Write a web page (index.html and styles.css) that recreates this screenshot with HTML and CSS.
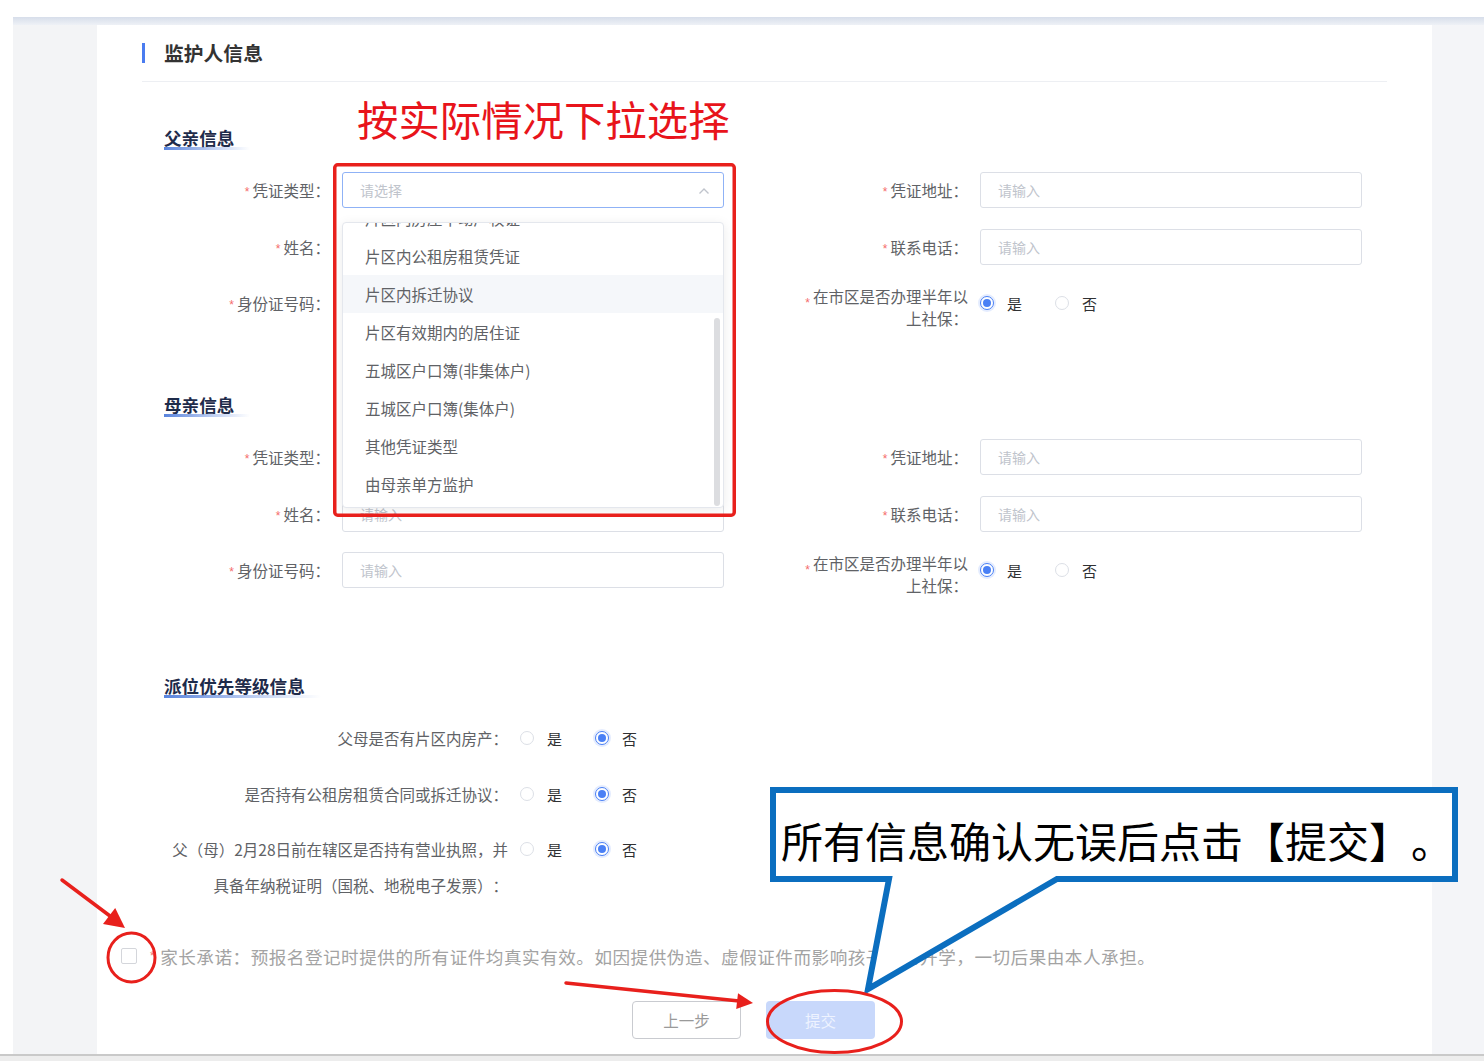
FILE: index.html
```html
<!DOCTYPE html>
<html lang="zh-CN">
<head>
<meta charset="utf-8">
<title>监护人信息</title>
<link rel="stylesheet" href="styles.css">
</head>
<body>
<div class="top-gap"></div>
<div class="screen">
  <div class="topband"></div>
  <div class="main">
    <aside class="side"></aside>
    <section class="card">
      <div class="card-head"><span class="bar"></span><h2>监护人信息</h2></div>
      <div class="divider"></div>
      <div class="form">
        <h3 class="sub"><span>父亲信息</span></h3>
        <div class="grid">
          <div class="field">
            <label class="lbl"><i>*</i>凭证类型：</label>
            <div class="input select focus">请选择
              <svg class="chev" width="12" height="8" viewBox="0 0 12 8"><polyline points="1.5,6.5 6,2 10.5,6.5" fill="none" stroke="#c0c4cc" stroke-width="1.4"/></svg>
              <div class="dropdown">
                <ul>
                  <li>片区内房屋不动产权证</li>
                  <li>片区内公租房租赁凭证</li>
                  <li class="hover">片区内拆迁协议</li>
                  <li>片区有效期内的居住证</li>
                  <li>五城区户口簿(非集体户)</li>
                  <li>五城区户口簿(集体户)</li>
                  <li>其他凭证类型</li>
                  <li>由母亲单方监护</li>
                </ul>
                <span class="scroll"></span>
              </div>
            </div>
          </div>
          <div class="field">
            <label class="lbl"><i>*</i>凭证地址：</label>
            <div class="input">请输入</div>
          </div>
          <div class="field">
            <label class="lbl"><i>*</i>姓名：</label>
            <div class="input">请输入</div>
          </div>
          <div class="field">
            <label class="lbl"><i>*</i>联系电话：</label>
            <div class="input">请输入</div>
          </div>
          <div class="field">
            <label class="lbl"><i>*</i>身份证号码：</label>
            <div class="input">请输入</div>
          </div>
          <div class="field">
            <label class="lbl two"><i class="low">*</i>在市区是否办理半年以<br>上社保：</label>
            <div class="radios">
              <span class="radio on"></span><span class="opt">是</span>
              <span class="radio"></span><span class="opt">否</span>
            </div>
          </div>
        </div>

        <h3 class="sub sub-mother"><span>母亲信息</span></h3>
        <div class="grid">
          <div class="field">
            <label class="lbl"><i>*</i>凭证类型：</label>
            <div class="input">请选择</div>
          </div>
          <div class="field">
            <label class="lbl"><i>*</i>凭证地址：</label>
            <div class="input">请输入</div>
          </div>
          <div class="field">
            <label class="lbl"><i>*</i>姓名：</label>
            <div class="input">请输入</div>
          </div>
          <div class="field">
            <label class="lbl"><i>*</i>联系电话：</label>
            <div class="input">请输入</div>
          </div>
          <div class="field">
            <label class="lbl"><i>*</i>身份证号码：</label>
            <div class="input">请输入</div>
          </div>
          <div class="field">
            <label class="lbl two"><i class="low">*</i>在市区是否办理半年以<br>上社保：</label>
            <div class="radios">
              <span class="radio on"></span><span class="opt">是</span>
              <span class="radio"></span><span class="opt">否</span>
            </div>
          </div>
        </div>

        <h3 class="sub sub-prio"><span>派位优先等级信息</span></h3>
        <div class="prio">
          <div class="prow">
            <label class="plbl">父母是否有片区内房产：</label>
            <div class="radios">
              <span class="radio"></span><span class="opt">是</span>
              <span class="radio on"></span><span class="opt">否</span>
            </div>
          </div>
          <div class="prow">
            <label class="plbl">是否持有公租房租赁合同或拆迁协议：</label>
            <div class="radios">
              <span class="radio"></span><span class="opt">是</span>
              <span class="radio on"></span><span class="opt">否</span>
            </div>
          </div>
          <div class="prow">
            <label class="plbl">父（母）2月28日前在辖区是否持有营业执照，并<br>具备年纳税证明（国税、地税电子发票）：</label>
            <div class="radios">
              <span class="radio"></span><span class="opt">是</span>
              <span class="radio on"></span><span class="opt">否</span>
            </div>
          </div>
        </div>
      </div>

      <div class="agree">
        <span class="cb"></span><i>*</i><span>家长承诺：预报名登记时提供的所有证件均真实有效。如因提供伪造、虚假证件而影响孩子正常升学，一切后果由本人承担。</span>
      </div>
      <div class="btns">
        <button class="btn btn-prev">上一步</button>
        <button class="btn btn-submit">提交</button>
      </div>
    </section>
    <aside class="rightpane"></aside>
  </div>
</div>
<div class="bottom"></div>

<svg class="annot" width="1484" height="1061" viewBox="0 0 1484 1061">
  <rect x="334.75" y="164.75" width="399.5" height="350.5" rx="3" fill="none" stroke="#e8201c" stroke-width="3.5"/>
  <path d="M773,790 H1455 V879 H1057 L868,989 L889,879 H773 Z" fill="#fff" stroke="#0b6ebf" stroke-width="6" stroke-linejoin="miter"/>
  <ellipse cx="131.5" cy="957.5" rx="23.5" ry="24.5" fill="none" stroke="#e8201c" stroke-width="3"/>
  <ellipse cx="834.5" cy="1021.5" rx="67" ry="31" fill="none" stroke="#e8201c" stroke-width="3"/>
  <path d="M62,880 L110,916" stroke="#e8201c" stroke-width="3.5" stroke-linecap="round"/>
  <polygon points="125,928 103,924 115.2,908" fill="#e8201c"/>
  <path d="M566,983 L739,1001" stroke="#e8201c" stroke-width="3.5" stroke-linecap="round"/>
  <polygon points="753,1003 736.2,1009.1 738,993.3" fill="#e8201c"/>
</svg>
<div class="caption-red">按实际情况下拉选择</div>
<div class="callout-text">所有信息确认无误后点击【提交】。</div>
</body>
</html>
```

FILE: styles.css
```css
* { box-sizing: border-box; text-spacing-trim: space-all; }
html, body { margin: 0; padding: 0; }
body {
  width: 1484px;
  height: 1061px;
  overflow: hidden;
  background: #fff;
  position: relative;
  font-family: "Noto Sans CJK SC", "Noto Sans", sans-serif;
}
.top-gap { height: 17px; }
.screen {
  margin-left: 13px;
  height: 1037px;
  display: flex;
  flex-direction: column;
  background: #f4f5f7;
}
.topband {
  height: 8px;
  flex-shrink: 0;
  background: linear-gradient(#d7deea, #eef1f6);
}
.main { flex: 1; display: flex; min-height: 0; }
.side { width: 84px; background: #f3f4f6; }
.card {
  width: 1335px;
  background: #fff;
  padding: 17px 45px 0;
  position: relative;
}
.rightpane { flex: 1; background: #f4f5f8; }
.bottom {
  height: 7px;
  border-top: 2px solid #c9c9c9;
  background: #ededed;
}

.card-head { display: flex; align-items: center; height: 22px; }
.card-head .bar { width: 3px; height: 20px; background: #4a7cf0; margin-right: 19px; }
.card-head h2 { margin: 0; font-size: 19.8px; font-weight: 700; color: #333; line-height: 22px; }
.divider { margin-top: 17px; height: 1px; background: #edeff3; }

.form { padding-left: 22px; }
.sub {
  margin: 44px 0 0;
  font-size: 17.6px;
  font-weight: 700;
  line-height: 24px;
  height: 24px;
  color: #1e2b4a;
}
.sub span {
  display: inline-block;
  padding-right: 16px;
  background: linear-gradient(to right, rgba(60,110,215,.85), rgba(60,110,215,.3) 60%, rgba(60,110,215,0)) left bottom / 100% 3px no-repeat;
}
.sub-mother { margin-top: 64px; }
.sub-prio { margin-top: 78px; }

.grid {
  margin-top: 22px;
  display: grid;
  grid-template-columns: 560px 560px;
  column-gap: 78px;
  row-gap: 20.5px;
}
.field { display: flex; align-items: flex-start; gap: 12px; }
.lbl {
  width: 166px;
  height: 36px;
  flex-shrink: 0;
  text-align: right;
  font-size: 15.5px;
  line-height: 22px;
  padding-top: 7px;
  color: #606266;
}
.lbl.two { padding-top: 0; height: 44px; }
.lbl i, .agree i {
  font-style: normal;
  color: #f56c6c;
  font-size: 12px;
  line-height: 0;
  margin-right: 3px;
  font-family: "Liberation Sans", sans-serif;
  vertical-align: 1px;
}
.lbl i.low { vertical-align: -4px; }

.input {
  width: 382px;
  height: 36px;
  flex-shrink: 0;
  border: 1px solid #dcdfe6;
  border-radius: 3px;
  padding-left: 17px;
  display: flex;
  align-items: center;
  font-size: 14px;
  color: #c0c4cc;
  position: relative;
  background: #fff;
}
.select.focus { border-color: #8fb2f6; }
.chev { position: absolute; right: 13px; top: 14px; }

.dropdown {
  position: absolute;
  left: -1px;
  top: 49px;
  width: 382px;
  height: 286px;
  background: #fff;
  border: 1px solid #e4e7ed;
  border-radius: 4px;
  box-shadow: 0 2px 12px rgba(0,0,0,.08);
  overflow: hidden;
  z-index: 5;
}
.dropdown ul { list-style: none; margin: -24px 0 0; padding: 0; }
.dropdown li {
  height: 38px;
  line-height: 38px;
  padding-left: 22px;
  font-size: 15.5px;
  color: #606266;
}
.dropdown li.hover { background: #f5f7fa; }
.scroll {
  position: absolute;
  right: 3px;
  top: 95px;
  width: 6px;
  height: 188px;
  border-radius: 3px;
  background: #dcdde0;
}

.radios {
  display: flex;
  align-items: center;
  height: 36px;
  font-size: 15px;
  color: #303133;
}
.radio {
  width: 14px;
  height: 14px;
  border: 1px solid #dcdfe6;
  border-radius: 50%;
  margin-right: 13px;
  flex-shrink: 0;
  position: relative;
  background: #fff;
}
.radio.on { border-color: #4a80f5; box-shadow: 0 0 0 2px rgba(74,128,245,.15); }
.radio.on::after {
  content: "";
  position: absolute;
  left: 2px;
  top: 2px;
  width: 8px;
  height: 8px;
  border-radius: 50%;
  background: #4a80f5;
}
.opt { margin-right: 33px; }

.prio { margin-top: 22px; }
.prow { display: flex; align-items: flex-start; gap: 12px; margin-bottom: 20px; }
.prow:nth-child(2) { margin-bottom: 19px; }
.prow:last-child { margin-bottom: 0; }
.plbl {
  width: 344px;
  flex-shrink: 0;
  text-align: right;
  font-size: 15.5px;
  line-height: 36px;
  color: #606266;
}

.agree {
  margin: 42px 0 0 -21px;
  display: flex;
  align-items: center;
  height: 22px;
  font-size: 17.6px;
  letter-spacing: .5px;
  color: #a3a3a3;
  white-space: nowrap;
}
.cb {
  width: 16px;
  height: 16px;
  border: 1px solid #d4d6db;
  border-radius: 2px;
  margin-right: 13px;
  flex-shrink: 0;
}
.agree i { margin-right: 5px; }

.btns {
  margin-top: 34px;
  display: flex;
  justify-content: center;
  gap: 25px;
  padding-right: 22px;
}
.btn {
  width: 109px;
  height: 38px;
  border-radius: 4px;
  font-family: "Noto Sans CJK SC", sans-serif;
  font-size: 15.5px;
}
.btn-prev { border: 1px solid #c9cbd0; color: #9a9a9a; background: #fff; }
.btn-submit { border: none; background: #c8d8fb; color: #eef3ff; }

.annot { position: absolute; left: 0; top: 0; z-index: 10; pointer-events: none; }
.caption-red {
  position: absolute;
  left: 357px;
  top: 96px;
  font-size: 41.4px;
  line-height: 44px;
  color: #e8141b;
  z-index: 11;
  white-space: nowrap;
}
.callout-text {
  position: absolute;
  left: 781px;
  top: 816px;
  font-size: 42px;
  line-height: 48px;
  color: #000;
  z-index: 11;
  white-space: nowrap;
}
```
